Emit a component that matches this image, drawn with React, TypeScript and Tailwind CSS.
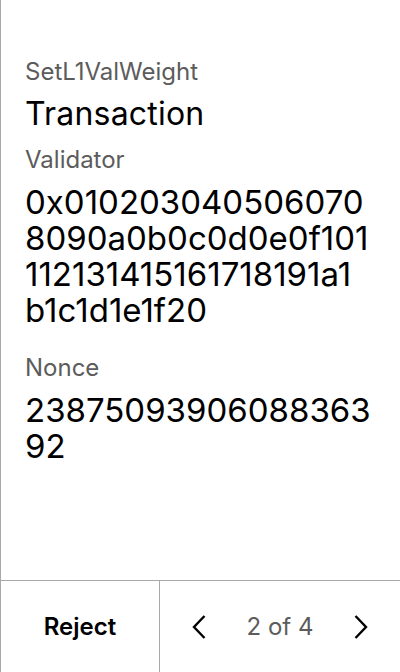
import React from "react";

const hex = "0x010203040506070\n8090a0b0c0d0e0f101\n112131415161718191a1\nb1c1d1e1f20";

export default function App() {
  return (
    <div
      className="w-[400px] h-[672px] bg-white flex flex-col border-l border-[#a9a9a9] text-black"
      style={{ fontFamily: "Inter, 'Noto Sans', sans-serif" }}
    >
      <div className="flex-1 px-6 pt-[56px] flex flex-col">
        <div className="text-[24px] leading-[32px] text-[#5c5c5c]">SetL1ValWeight</div>
        <div className="text-[32px] leading-[36px] mt-[8px] tracking-[0.2px]">Transaction</div>
        <div className="text-[24px] leading-[32px] text-[#5c5c5c] mt-[12px]">Validator</div>
        <div className="text-[33px] leading-[36px] mt-[8px] whitespace-pre-line">{hex}</div>
        <div className="text-[24px] leading-[32px] text-[#5c5c5c] mt-[24px]">Nonce</div>
        <div className="text-[33px] leading-[36px] break-all mt-[8px]">2387509390608836392</div>
      </div>
      <div className="h-[92px] border-t border-[#a9a9a9] flex">
        <button className="w-[159px] border-r border-[#a9a9a9] flex items-center justify-center text-[24px] font-semibold">
          Reject
        </button>
        <div className="flex-1 flex items-center justify-between px-[31px]">
          <svg width="16" height="26" viewBox="0 0 16 26" fill="none" stroke="black" strokeWidth="2.4">
            <path d="M13.5 2 L3 13 L13.5 24" />
          </svg>
          <span className="text-[24px] text-[#5c5c5c]">2 of 4</span>
          <svg width="16" height="26" viewBox="0 0 16 26" fill="none" stroke="black" strokeWidth="2.4">
            <path d="M2.5 2 L13 13 L2.5 24" />
          </svg>
        </div>
      </div>
    </div>
  );
}
